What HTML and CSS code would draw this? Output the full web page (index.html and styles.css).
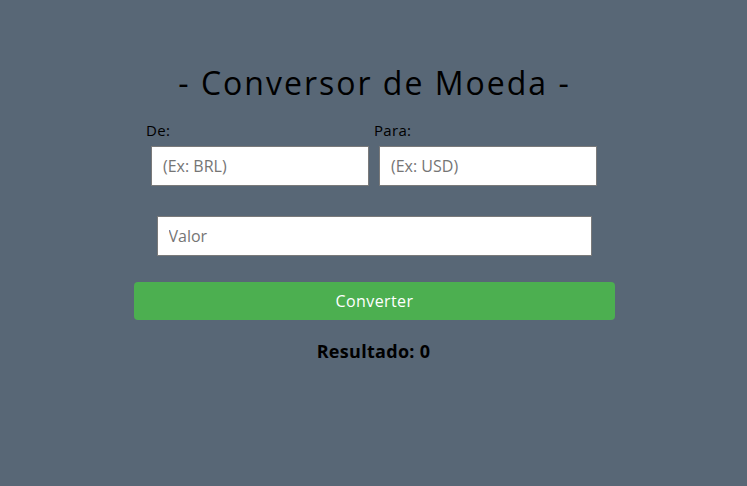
FILE: index.html
```html
<!DOCTYPE html>
<html lang="pt">
<head>
<meta charset="utf-8">
<title>Conversor de Moeda</title>
<link rel="stylesheet" href="styles.css">
</head>
<body>
<main class="card">
  <h1 class="title">- Conversor de Moeda -</h1>
  <div class="pair">
    <div class="field">
      <label class="label" for="de">De:</label>
      <input class="input" id="de" type="text" placeholder="(Ex: BRL)">
    </div>
    <div class="field">
      <label class="label" for="para">Para:</label>
      <input class="input" id="para" type="text" placeholder="(Ex: USD)">
    </div>
  </div>
  <div class="value-row">
    <input class="input input-wide" type="text" placeholder="Valor">
  </div>
  <button class="btn" type="button">Converter</button>
  <p class="result">Resultado: 0</p>
</main>
</body>
</html>
```
FILE: styles.css
```css
html, body {
  margin: 0;
  padding: 0;
}
body {
  background: #586776;
  font-family: "Open Sans", "DejaVu Sans", sans-serif;
  color: #000;
  height: 486px;
}
.card {
  width: 481px;
  margin: 0 auto;
  padding-top: 63px;
  display: flex;
  flex-direction: column;
}
.title {
  margin: 0;
  text-align: center;
  font-size: 32px;
  line-height: 40px;
  font-weight: 400;
  letter-spacing: 2px;
  padding-left: 2px;
}
.pair {
  display: flex;
  padding: 17px 12px 0 13px;
}
.field {
  width: 230px;
  display: flex;
  flex-direction: column;
  align-items: flex-start;
}
.label {
  font-size: 15px;
  line-height: 20px;
  margin-bottom: 6px;
  letter-spacing: 0.3px;
}
.input {
  box-sizing: border-box;
  width: 218px;
  height: 40px;
  margin-left: 5px;
  border: 1px solid #7a7a7a;
  background: #fff;
  padding: 0 11px;
  font-family: inherit;
  font-size: 16px;
  color: #333;
  outline: none;
}
.input::placeholder {
  color: #757575;
}
.value-row {
  display: flex;
  justify-content: center;
  padding-top: 30px;
  padding-left: 1px;
}
.input-wide {
  width: 435px;
  margin-left: 0;
}
.btn {
  margin-top: 26px;
  margin-left: 1px;
  height: 38px;
  width: 481px;
  border: none;
  border-radius: 4px;
  background: #4caf50;
  color: #fff;
  font-family: inherit;
  font-size: 16px;
  letter-spacing: 0.4px;
}
.result {
  margin: 21px 0 0;
  text-align: center;
  font-size: 18px;
  line-height: 20px;
  font-weight: 700;
  letter-spacing: 0.3px;
}
```
